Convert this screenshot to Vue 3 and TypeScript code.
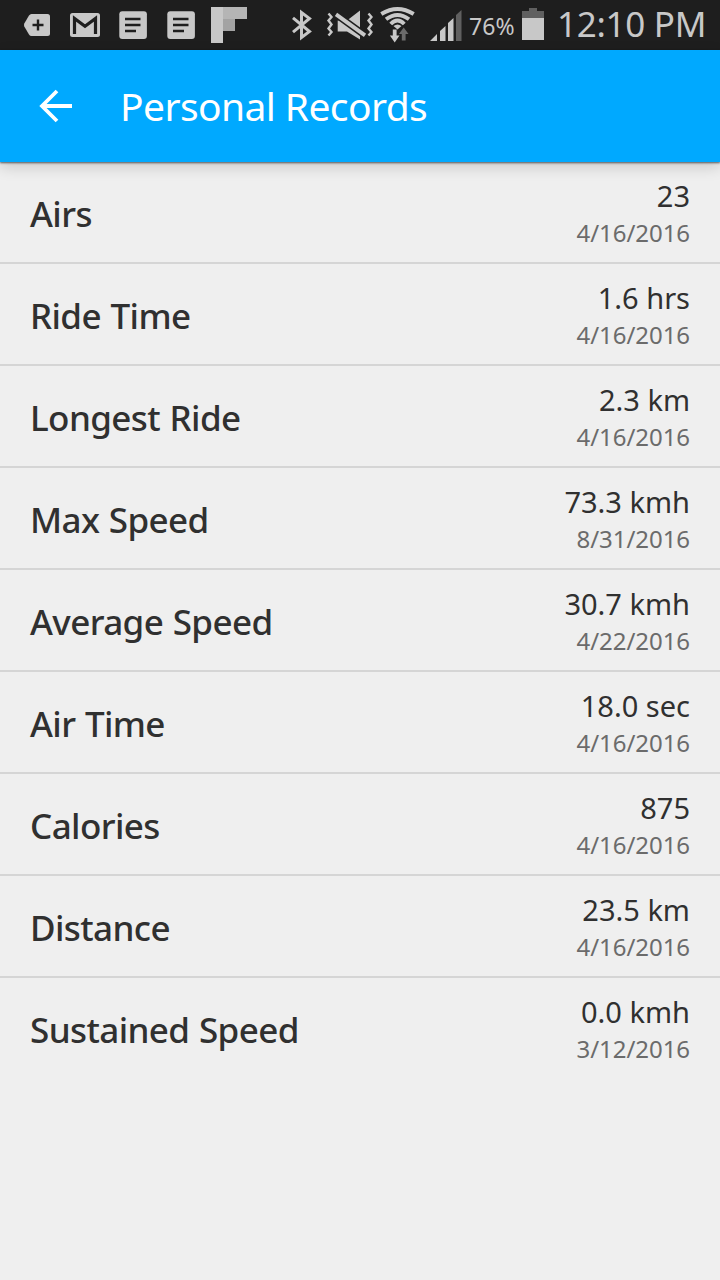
<script setup lang="ts">
interface PersonalRecord {
  label: string
  value: string
  date: string
}

const records: PersonalRecord[] = [
  { label: 'Airs', value: '23', date: '4/16/2016' },
  { label: 'Ride Time', value: '1.6 hrs', date: '4/16/2016' },
  { label: 'Longest Ride', value: '2.3 km', date: '4/16/2016' },
  { label: 'Max Speed', value: '73.3 kmh', date: '8/31/2016' },
  { label: 'Average Speed', value: '30.7 kmh', date: '4/22/2016' },
  { label: 'Air Time', value: '18.0 sec', date: '4/16/2016' },
  { label: 'Calories', value: '875', date: '4/16/2016' },
  { label: 'Distance', value: '23.5 km', date: '4/16/2016' },
  { label: 'Sustained Speed', value: '0.0 kmh', date: '3/12/2016' },
]
</script>

<template>
  <div class="screen">
    <header class="status-bar">
      <div class="notifications">
        <svg width="28" height="50" viewBox="23 0 28 50">
          <path d="M31.5 14H47.5Q50 14 50 16.500V33.500Q50 36 47.500 36H31.500Q30 36 29 34.500L24.300 26.500Q23.600 25 24.300 23.500L29 15.500Q30 14 31.500 14Z" fill="#c8c8c8" />
          <path d="M38 19.500V30.500M32.500 25H43.500" stroke="#1e1e1e" stroke-width="2.400" />
        </svg>
        <svg width="30" height="50" viewBox="70 0 30 50">
          <rect x="70" y="13" width="30" height="24" rx="2.500" fill="#c8c8c8" />
          <path d="M74.500 34V18.500L85 26.300L95.500 18.500V34" fill="none" stroke="#1e1e1e" stroke-width="3.200" />
        </svg>
        <svg v-for="n in 2" :key="n" class="news" width="28" height="50" viewBox="119 0 28 50">
          <rect x="119.300" y="11.300" width="27.600" height="27.600" rx="3" fill="#c8c8c8" />
          <path d="M125 19H140.500M125 25H140.500M125 31H136" stroke="#1e1e1e" stroke-width="2.300" />
        </svg>
        <svg class="flipboard" width="36" height="50" viewBox="211 0 36 50">
          <path d="M211 7H223V43H211Z" fill="#c8c8c8" />
          <path d="M223 7H247V19H223Z" fill="#b5b5b5" />
          <path d="M223 19H235V31H223Z" fill="#a3a3a3" />
        </svg>
      </div>
      <div class="indicators">
        <svg width="22" height="50" viewBox="291 0 22 50">
          <path d="M293 17.800L309.500 31.500L301.500 37.500V12.500L309.500 18.500L293 32.200" fill="none" stroke="#c8c8c8" stroke-width="3" />
        </svg>
        <svg class="muted" width="47" height="50" viewBox="326 0 47 50">
          <path d="M337.700 20.500H347L360 10.500V39.500L347 31.500H337.700Z" fill="#c8c8c8" />
          <path d="M334 12.800L367 36.800" stroke="#1e1e1e" stroke-width="7" />
          <path d="M336 14.300L365 35.400" stroke="#c8c8c8" stroke-width="3.900" />
          <path d="M328.500 13.500L331.500 17L328.500 20.500L331.500 24.500L328.500 28.500L331.500 32L328.500 35.500M368.500 13.500L371.500 17L368.500 20.500L371.500 24.500L368.500 28.500L371.500 32L368.500 35.500" fill="none" stroke="#c8c8c8" stroke-width="2.400" />
        </svg>
        <svg class="wifi" width="36" height="50" viewBox="380 0 36 50">
          <path d="M381.300 14Q397.500 4 413.700 14M386 19.300Q397.500 10.500 409 19.300M390.700 24Q397.500 17 404.300 24" fill="none" stroke="#c8c8c8" stroke-width="3.900" />
          <path d="M393.500 26Q397.500 22.800 401.500 26L397.500 29.500Z" fill="#c8c8c8" />
          <path d="M392.800 29.500H396.600V35.500H399.500L394.700 42.500L389.900 35.500H392.800Z" fill="#c8c8c8" />
          <path d="M403.700 27.500L408.500 34H405.600V40.500H401.800V34H398.900Z" fill="#6c6c6c" />
        </svg>
        <svg class="signal" width="32" height="50" viewBox="430 0 32 50">
          <path d="M430 41L437 34V41ZM440 31L445.500 26V41H440ZM448 23L453.500 18V41H448Z" fill="#c8c8c8" />
          <path d="M456 15L461.500 10V41H456Z" fill="#606060" />
        </svg>
        <span class="battery-level">76%</span>
        <svg class="battery" width="22" height="50" viewBox="522 0 22 50">
          <path d="M522 11H529V8H537V11H544V18H522Z" fill="#606060" />
          <path d="M522 18H544V40H522Z" fill="#c8c8c8" />
        </svg>
        <span class="clock">12:10 PM</span>
      </div>
    </header>
    <nav class="toolbar">
      <svg width="34" height="34" viewBox="39 89 34 34">
        <path d="M72 106H42.500M57 91L42 106L57 121" fill="none" stroke="#fff" stroke-width="3.800" />
      </svg>
      <h1>Personal Records</h1>
    </nav>
    <main class="records">
      <div v-for="record in records" :key="record.label" class="row">
        <span class="label">{{ record.label }}</span>
        <div class="result">
          <span class="value">{{ record.value }}</span>
          <span class="date">{{ record.date }}</span>
        </div>
      </div>
    </main>
  </div>
</template>

<style>
body {
  background: #efefef;
}
</style>

<style scoped>
.screen {
  width: 720px;
  height: 1280px;
  overflow: hidden;
  background: #efefef;
  color: #303030;
  font-family: "Noto Sans", sans-serif;
  white-space: nowrap;
}

svg {
  display: block;
  flex: none;
}

.status-bar {
  display: flex;
  justify-content: space-between;
  height: 50px;
  padding-left: 23px;
  background: #1e1e1e;
  color: #c8c8c8;
}

.notifications,
.indicators {
  display: flex;
}

.notifications {
  gap: 19px;
}

.news + .news {
  margin-left: 1px;
}

.flipboard {
  margin-left: -3px;
}

.indicators {
  width: 429px;
}

.muted {
  margin-left: 13px;
}

.wifi {
  margin-left: 7px;
}

.signal {
  margin-left: 14px;
}

.battery-level {
  width: 53px;
  margin-left: 7px;
  font-size: 23px;
  line-height: 52px;
  letter-spacing: 0.1px;
}

.clock {
  margin-left: 13px;
  font-size: 35px;
  line-height: 47px;
  letter-spacing: -0.3px;
}

.toolbar {
  position: relative;
  display: flex;
  align-items: center;
  height: 112px;
  padding-left: 39px;
  box-sizing: border-box;
  background: #00a9ff;
  box-shadow: 0 1px 2px rgba(0, 0, 0, 0.6), 0 5px 14px rgba(0, 0, 0, 0.16);
}

h1 {
  margin: 0 0 0 47px;
  color: #fff;
  font-size: 39px;
  font-weight: 400;
  line-height: 54px;
  letter-spacing: -0.6px;
}

.row {
  display: flex;
  align-items: center;
  justify-content: space-between;
  height: 102px;
  padding: 3px 30px 0;
  box-sizing: border-box;
  border-bottom: 2px solid #d5d5d5;
}

.row:last-child {
  border-bottom-color: transparent;
}

.label {
  font-size: 35px;
  font-weight: 500;
  line-height: 48px;
  letter-spacing: -0.6px;
  word-spacing: 1px;
}

.result {
  display: flex;
  flex-direction: column;
  align-items: flex-end;
}

.value {
  font-size: 29px;
  line-height: 38px;
}

.date {
  color: #6b6b6b;
  font-size: 24px;
  line-height: 35px;
  letter-spacing: -0.05px;
}
</style>
